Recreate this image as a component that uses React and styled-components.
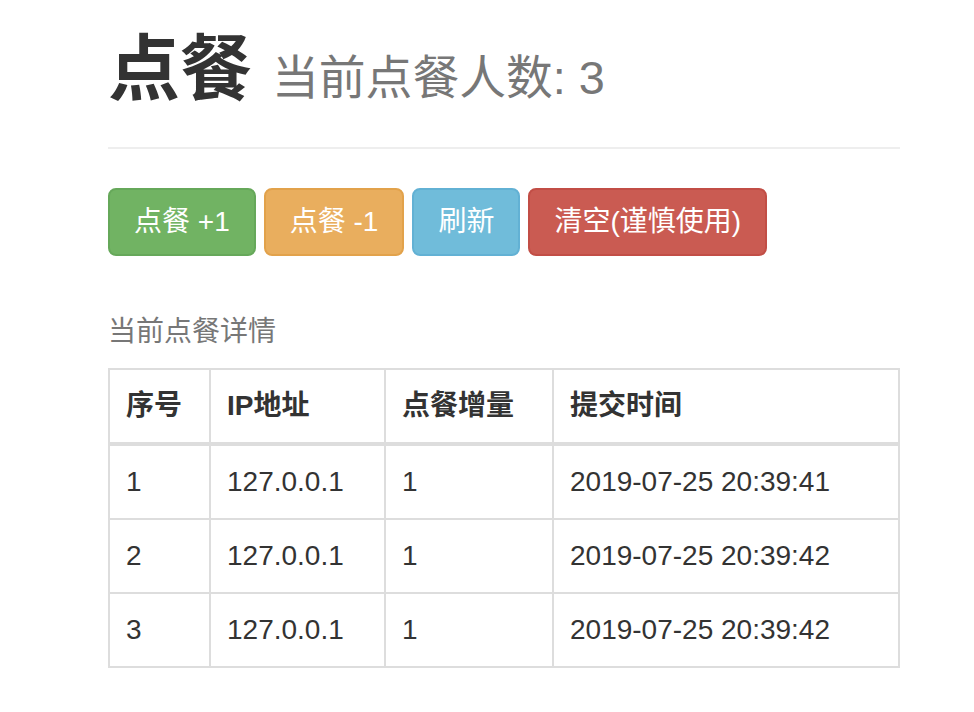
import React from 'react'
import styled, { createGlobalStyle } from 'styled-components'

const GlobalStyle = createGlobalStyle`
	html, body {
		margin: 0;
		padding: 0;
		background: #fff;
	}
	body {
		font-family: "Liberation Sans", "Noto Sans CJK SC", sans-serif;
		font-size: 28px;
		line-height: 40px;
		color: #333;
	}
	* {
		box-sizing: border-box;
	}
`

const Container = styled.div`
	width: 900px;
	padding-left: 108px;
`

const PageHeader = styled.div`
	padding-bottom: 18px;
	margin: 30px 0 39px;
	border-bottom: 2px solid #eee;
`

const Title = styled.h1`
	margin: 0 0 20px;
	font-size: 72px;
	line-height: 1.1;
	font-weight: 700;
	color: #333;
`

const Small = styled.small`
	font-size: 65%;
	font-weight: 400;
	color: #777;
`

const Toolbar = styled.div`
	display: flex;
	gap: 8px;
	margin-bottom: 40px;
`

const palette = {
	success: { bg: '#71b363', border: '#66a85a' },
	warning: { bg: '#e9ae5e', border: '#e2a24b' },
	info: { bg: '#70bcda', border: '#62b1d4' },
	danger: { bg: '#ca5b52', border: '#c24e46' },
}

const Button = styled.button`
	font-family: inherit;
	font-size: 28px;
	line-height: 40px;
	padding: 12px 24px;
	border-radius: 8px;
	border: 2px solid ${(p) => palette[p.$kind].border};
	background: ${(p) => palette[p.$kind].bg};
	color: #fff;
	cursor: pointer;
	white-space: nowrap;
`

const Table = styled.table`
	width: 792px;
	border-collapse: collapse;
	border-spacing: 0;
	border: 2px solid #ddd;
`

const Caption = styled.caption`
	text-align: left;
	padding: 16px 0;
	color: #777;
`

const Th = styled.th`
	text-align: left;
	font-weight: 700;
	padding: 16px;
	line-height: 40px;
	border: 2px solid #ddd;
	border-bottom-width: 4px;
	width: ${(p) => p.$w}px;
`

const Td = styled.td`
	padding: 16px;
	line-height: 40px;
	border: 2px solid #ddd;
`

const rows = [
	{ id: 1, ip: '127.0.0.1', count: 1, time: '2019-07-25 20:39:41' },
	{ id: 2, ip: '127.0.0.1', count: 1, time: '2019-07-25 20:39:42' },
	{ id: 3, ip: '127.0.0.1', count: 1, time: '2019-07-25 20:39:42' },
]

const App = () => {
	return (
		<Container>
			<GlobalStyle />
			<PageHeader>
				<Title>
					点餐 <Small>当前点餐人数: 3</Small>
				</Title>
			</PageHeader>
			<Toolbar>
				<Button $kind="success">点餐 +1</Button>
				<Button $kind="warning">点餐 -1</Button>
				<Button $kind="info">刷新</Button>
				<Button $kind="danger">清空(谨慎使用)</Button>
			</Toolbar>
			<Table>
				<Caption>当前点餐详情</Caption>
				<thead>
					<tr>
						<Th $w={101}>序号</Th>
						<Th $w={175}>IP地址</Th>
						<Th $w={168}>点餐增量</Th>
						<Th>提交时间</Th>
					</tr>
				</thead>
				<tbody>
					{rows.map((row) => (
						<tr key={row.id}>
							<Td>{row.id}</Td>
							<Td>{row.ip}</Td>
							<Td>{row.count}</Td>
							<Td>{row.time}</Td>
						</tr>
					))}
				</tbody>
			</Table>
		</Container>
	)
}

export default App
